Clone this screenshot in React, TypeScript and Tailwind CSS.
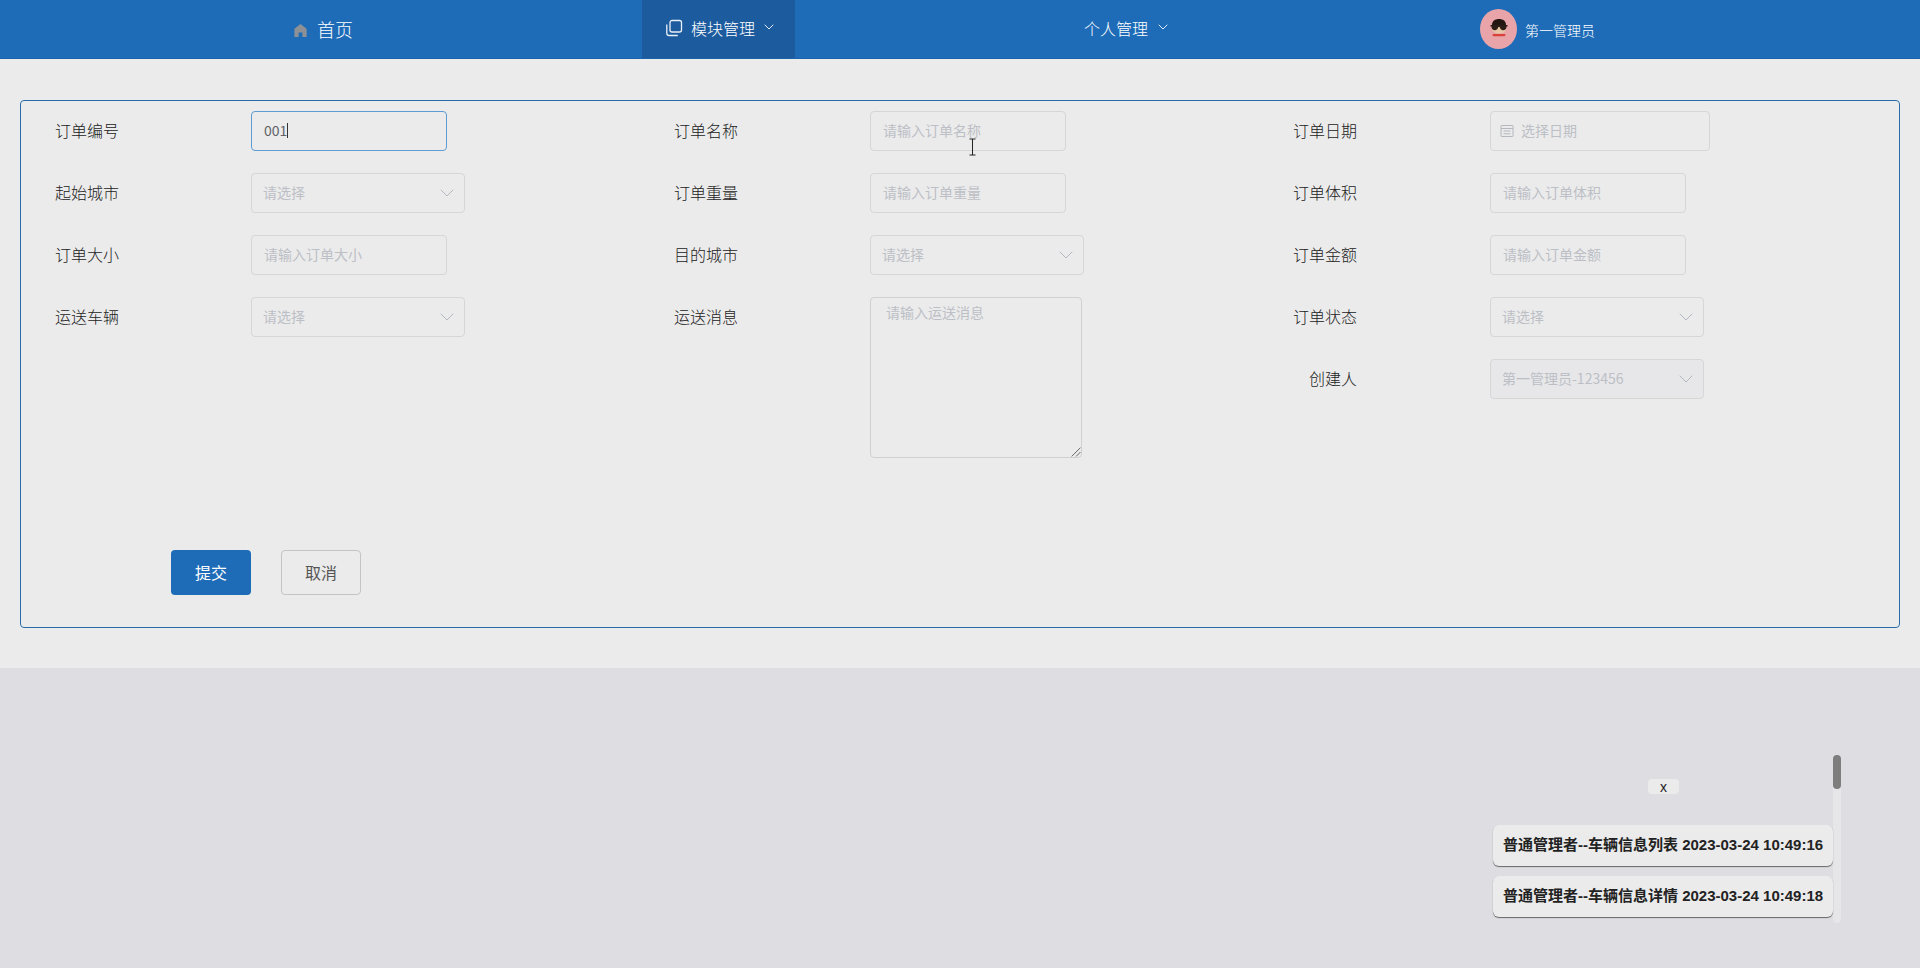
import { ChevronDown } from "lucide-react";

const sans = "font-['Noto_Sans_CJK_SC','Liberation_Sans',sans-serif]";

function HomeIcon() {
  return (
    <svg viewBox="0 0 13 13" className="w-[13px] h-[13px] mt-[3px]" fill="#8d9196">
      <path d="M6.5 0 12 4.2a1.2 1.2 0 0 1 .6 1V13H8.4V8.6H4.6V13H.4V5.2a1.2 1.2 0 0 1 .6-1z" />
    </svg>
  );
}

function CopyIcon() {
  return (
    <svg viewBox="0 0 18 18" className="w-[18px] h-[18px]" fill="none" stroke="#e8f0f8" strokeWidth="1.3">
      <rect x="5" y="1.5" width="11.5" height="11.5" rx="2" />
      <path d="M1.8 5.5v8.7a2.3 2.3 0 0 0 2.3 2.3h8.7" />
    </svg>
  );
}

function DateIcon() {
  return (
    <svg viewBox="0 0 14 14" className="w-[14px] h-[14px]" fill="none" stroke="#b4b7be" strokeWidth="1">
      <rect x="1" y="1.5" width="12" height="11" rx="0.5" />
      <path d="M1 4.5h12M3.5 7h7M3.5 9.8h7" />
    </svg>
  );
}

function Avatar() {
  return (
    <div className="w-[37px] h-[40px] rounded-[50%] bg-[#e8a4a8] flex items-center justify-center">
      <svg viewBox="0 0 24 24" className="w-[24px] h-[24px]">
        <ellipse cx="12" cy="12" rx="7" ry="4.5" fill="#e6c4a4" />
        <path d="M5 8c0-4 3-6 7-6s7 2 7 6z" fill="#231612" />
        <path d="M3.5 8h17v1.5h-1c0 2.5-1.5 3.7-3.3 3.7S13 12 12.7 10h-1.4C11 12 9.600 13.200 7.800 13.200S4.500 12 4.500 9.500h-1z" fill="#2c1c16" />
        <rect x="5.500" y="17" width="13" height="2.200" rx="1.100" fill="#d8423a" />
      </svg>
    </div>
  );
}

function Label({ text }: { text: string }) {
  return (
    <label className="w-[98px] mr-[132px] shrink-0 text-right text-[16px] leading-[38px] text-[#222] font-light">
      {text}
    </label>
  );
}

function Field({ label, placeholder }: { label: string; placeholder: string }) {
  return (
    <div className="flex h-[40px]">
      <Label text={label} />
      <div className="w-[196px] h-[40px] rounded border border-[#d6d6d6] px-[12px] text-[14px] leading-[37px] text-[#bcbfc6]">
        {placeholder}
      </div>
    </div>
  );
}

function SelectField({ label, value = "请选择", disabled }: { label: string; value?: string; disabled?: boolean }) {
  return (
    <div className="flex h-[40px]">
      <Label text={label} />
      <div
        className={`w-[214px] h-[40px] rounded border border-[#d6d6d6] pl-[11px] pr-[5px] flex items-center justify-between text-[14px] text-[#bcbfc6] ${
          disabled ? "bg-[#e7e7e9]" : ""
        }`}
      >
        <span className="-mt-[1px]">{value}</span>
        <ChevronDown className="w-[24px] h-[24px] -mt-[1px]" strokeWidth={1} color="#b4b8c0" />
      </div>
    </div>
  );
}

export default function App() {
  return (
    <div className={`relative min-h-screen bg-[#dddde2] ${sans}`}>
      <nav className="h-[59px] bg-[#1e6cb8] border-b border-[#1a64ad] flex text-white font-light">
        <div className="ml-[294px] w-[348px] flex items-center text-[18px]">
          <HomeIcon />
          <span className="ml-[10px]">首页</span>
        </div>
        <div className="w-[153px] bg-[#1d5b9f] flex items-center pl-[23px] text-[16px] pb-[2px]">
          <CopyIcon />
          <span className="ml-[8px]">模块管理</span>
          <ChevronDown className="ml-[6px] w-[16px] h-[16px] -mt-[2px]" strokeWidth={1.3} />
        </div>
        <div className="ml-[289px] w-[396px] flex items-center text-[16px] pb-[2px]">
          <span>个人管理</span>
          <ChevronDown className="ml-[7px] w-[16px] h-[16px] -mt-[2px]" strokeWidth={1.3} />
        </div>
        <div className="flex items-center text-[14px]">
          <Avatar />
          <span className="ml-[8px] mt-[2px]">第一管理员</span>
        </div>
      </nav>

      <div className="h-[609px] bg-[#ebebeb] pt-[41px] px-[20px]">
        <div className="h-[528px] rounded border border-[#2a6cab] pt-[10px] relative">
          <div className="grid grid-cols-[619px_619px_619px]">
            <div className="flex flex-col gap-[22px]">
              <div className="flex h-[40px]">
                <Label text="订单编号" />
                <div className="w-[196px] h-[40px] rounded border border-[#5f9bd3] px-[12px] text-[14px] leading-[37px] text-[#606266]">
                  001<span className="inline-block w-px h-[15px] bg-[#333] align-[-2px]" />
                </div>
              </div>
              <SelectField label="起始城市" />
              <Field label="订单大小" placeholder="请输入订单大小" />
              <SelectField label="运送车辆" />
            </div>

            <div className="flex flex-col gap-[22px]">
              <Field label="订单名称" placeholder="请输入订单名称" />
              <Field label="订单重量" placeholder="请输入订单重量" />
              <SelectField label="目的城市" />
              <div className="flex">
                <Label text="运送消息" />
                <div className="relative w-[212px] h-[161px] rounded border border-[#d0d0d0] px-[15px] py-[4px] text-[14px] leading-[21px] text-[#bcbfc6]">
                  请输入运送消息
                  <svg viewBox="0 0 10 10" className="absolute right-[0px] bottom-[0px] w-[11px] h-[11px]" stroke="#555" strokeWidth="0.8">
                    <path d="M9.500 1.500 1.500 9.500M9.500 5.500 5.500 9.500" />
                  </svg>
                </div>
              </div>
            </div>

            <div className="flex flex-col gap-[22px] [&_label]:mr-[133px]">
              <div className="flex h-[40px]">
                <Label text="订单日期" />
                <div className="w-[220px] h-[40px] rounded border border-[#d6d6d6] pl-[9px] flex items-center gap-[7px] text-[14px] text-[#bcbfc6]">
                  <DateIcon />
                  <span className="-mt-[1px]">选择日期</span>
                </div>
              </div>
              <Field label="订单体积" placeholder="请输入订单体积" />
              <Field label="订单金额" placeholder="请输入订单金额" />
              <SelectField label="订单状态" />
              <SelectField label="创建人" value="第一管理员-123456" disabled />
            </div>
          </div>

          <div className="absolute left-[150px] top-[449px] flex gap-[30px]">
            <button type="button" className="w-[80px] h-[45px] rounded bg-[#1e6cb8] text-white text-[16px] pb-[1px]">
              提交
            </button>
            <button type="button" className="w-[80px] h-[45px] rounded border border-[#c4c4c4] text-[#555] text-[16px] pb-[1px]">
              取消
            </button>
          </div>
        </div>
      </div>

      {/* text cursor left over the form */}
      <svg viewBox="0 0 9 18" className="absolute left-[968px] top-[138px] w-[9px] h-[18px]" fill="none" stroke="#222" strokeWidth="1">
        <path d="M1.500 1h6M4.500 1v16M1.500 17h6" />
      </svg>

      {/* log popup bottom right */}
      <div className="absolute left-[1648px] top-[779px] w-[31px] h-[15px] rounded-sm bg-[#ebebeb] text-center text-[14px] leading-[16px] text-[#222] font-['Liberation_Sans',sans-serif]">
        x
      </div>
      <div className="absolute left-[1833px] top-[755px] w-[8px] h-[168px] bg-[#e6e6e9] rounded">
        <div className="w-[8px] h-[34px] rounded bg-[#7d7d7d]" />
      </div>
      <div className="absolute left-[1493px] top-[825px] w-[340px] flex flex-col gap-[10px]">
        {["普通管理者--车辆信息列表 2023-03-24 10:49:16", "普通管理者--车辆信息详情 2023-03-24 10:49:18"].map((t) => (
          <div
            key={t}
            className="h-[41px] rounded-md bg-[#ebebeb] shadow-[0_1px_1px_#666] pl-[10px] text-[15px] leading-[40px] font-bold text-[#222] whitespace-nowrap font-['Liberation_Sans','Noto_Sans_CJK_SC',sans-serif]"
          >
            {t}
          </div>
        ))}
      </div>
    </div>
  );
}
